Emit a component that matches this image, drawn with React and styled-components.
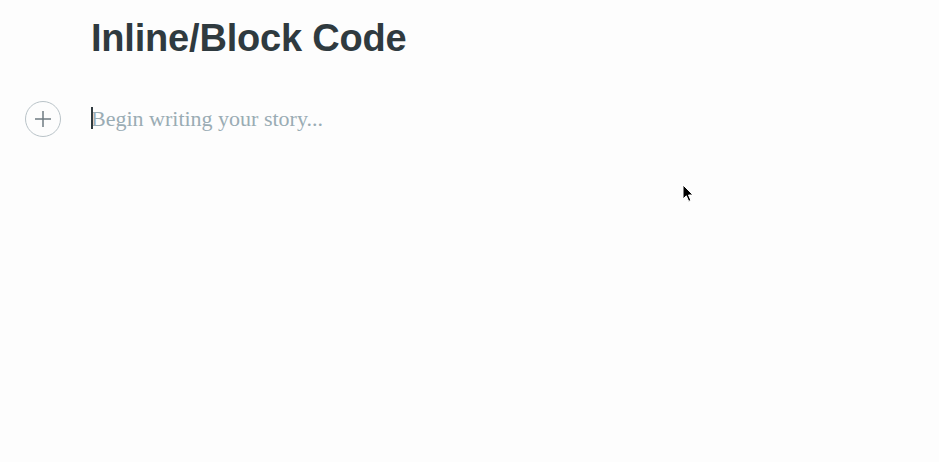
import React from 'react';
import styled, {createGlobalStyle} from 'styled-components';

const GlobalStyle = createGlobalStyle`
    html, body {
        margin: 0;
        padding: 0;
        background: #fdfdfd;
    }
    body {
        width: 939px;
        height: 462px;
        overflow: hidden;
        font-family: "Liberation Sans", Arial, sans-serif;
    }
`;

const Page = styled.div`
    position: relative;
    width: 939px;
    height: 462px;
    padding: 15px 0 0 25px;
    box-sizing: border-box;
`;

const Title = styled.h1`
    margin: 0 0 0 66px;
    font-family: "Liberation Sans", Arial, sans-serif;
    font-weight: 700;
    font-size: 38px;
    line-height: 46px;
    letter-spacing: -0.2px;
    color: #2f3a3f;
`;

const Block = styled.div`
    display: flex;
    align-items: center;
    gap: 30px;
    margin-top: 40px;
`;

const AddButton = styled.button`
    display: flex;
    align-items: center;
    justify-content: center;
    width: 36px;
    height: 36px;
    padding: 0;
    border: 1px solid #b9c3c8;
    border-radius: 50%;
    background: transparent;
    color: #6f7b81;
    cursor: pointer;
`;

const Editable = styled.div`
    position: relative;
    font-family: "Liberation Serif", Georgia, serif;
    font-size: 22px;
    line-height: 30px;
    color: #9aacb4;
`;

const Caret = styled.span`
    position: absolute;
    left: 0;
    top: 3px;
    width: 1.5px;
    height: 22px;
    background: #2f3a3f;
`;

const Pointer = styled.svg`
    position: absolute;
    left: 682px;
    top: 184px;
`;

const PlusIcon = () => (
    <svg width="18" height="18" viewBox="0 0 18 18">
        <path d="M9 1v16M1 9h16" stroke="currentColor" strokeWidth="1.5" fill="none" />
    </svg>
);

export default function App() {
    return (
        <Page>
            <GlobalStyle />
            <Title>Inline/Block Code</Title>
            <Block>
                <AddButton aria-label="Add block">
                    <PlusIcon />
                </AddButton>
                <Editable>
                    <Caret />
                    Begin writing your story...
                </Editable>
            </Block>
            <Pointer width="14" height="20" viewBox="0 0 14 20">
                <path
                    d="M1 1v14l3.3-3.2 2.4 5.6 2.2-1-2.4-5.4H11z"
                    fill="#000"
                    stroke="#fff"
                    strokeWidth="1"
                    strokeLinejoin="round"
                />
            </Pointer>
        </Page>
    );
}
